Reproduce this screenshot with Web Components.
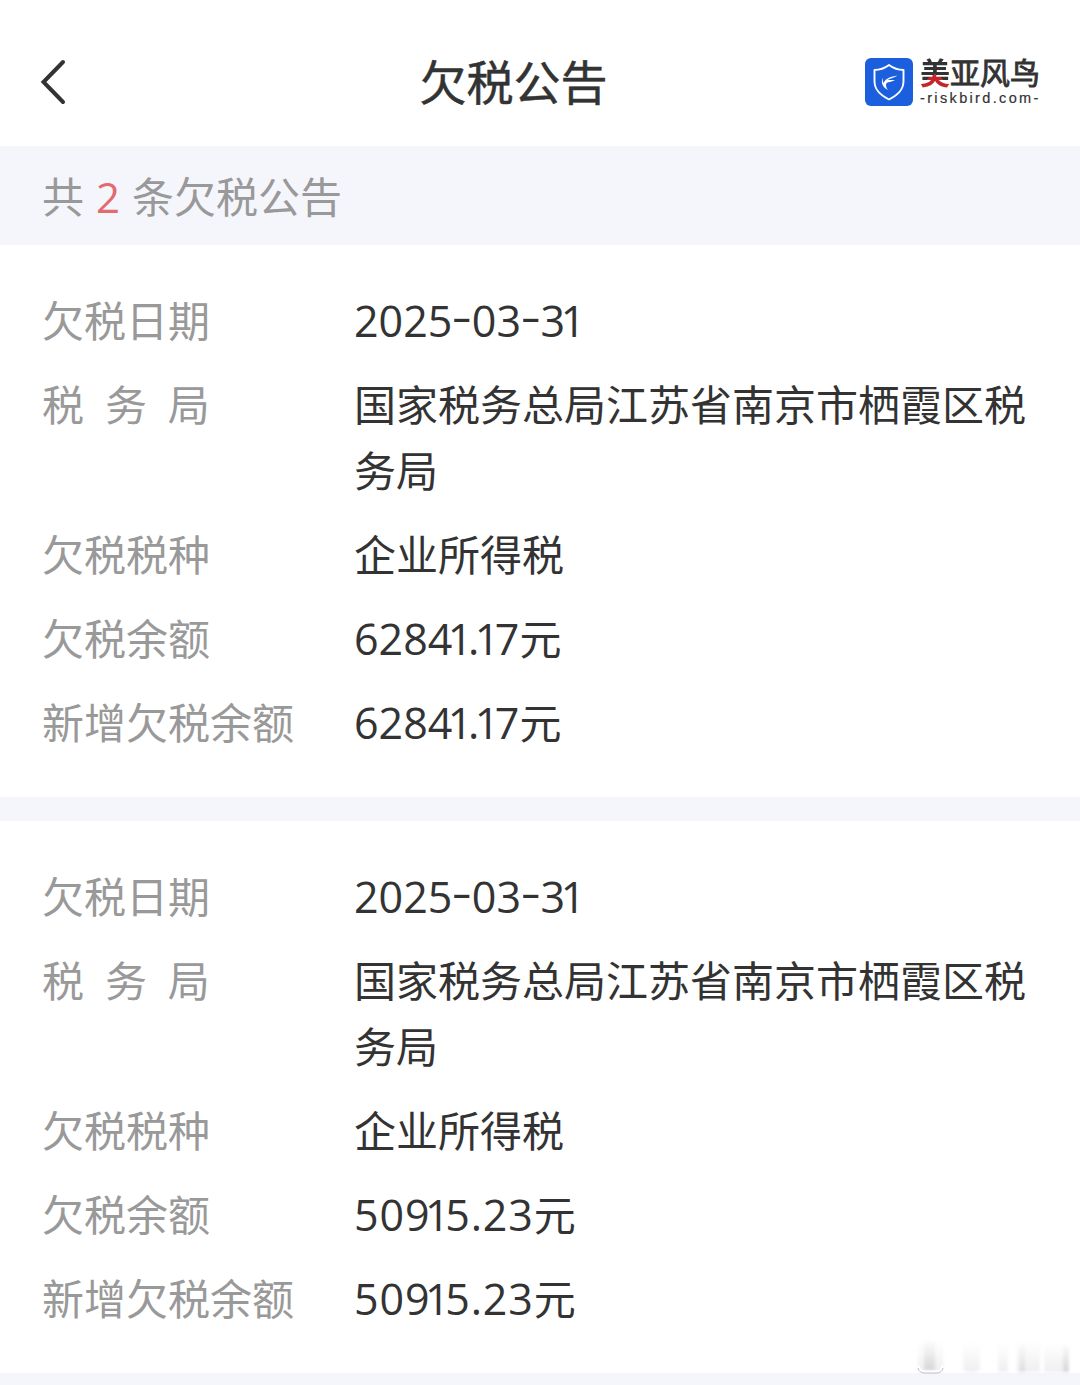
<!DOCTYPE html>
<html lang="zh-CN">
<head>
  <meta charset="utf-8">
  <title>欠税公告</title>
  <style>
    body {
      margin: 0;
      width: 1080px;
      height: 1385px;
      overflow: hidden;
      position: relative;
      background: #f5f6fc;
      color: #333;
      font-family: "Noto Sans CJK SC", sans-serif;
      font-size: 42px;
    }
    main {
      display: flex;
      flex-direction: column;
      gap: 24px;
    }
  </style>
</head>
<body>
  <page-header>欠税公告</page-header>
  <result-count total="2">条欠税公告</result-count>
  <main>
    <tax-notice date="2025-03-31" amount="62841.17"></tax-notice>
    <tax-notice date="2025-03-31" amount="50915.23" style="--tracking: 0.9px"></tax-notice>
  </main>
  <corner-mark></corner-mark>

  <script>
    class BrandLogo extends HTMLElement {
      constructor() {
        super();
        this.attachShadow({ mode: "open" });
        this.shadowRoot.innerHTML = `
          <style>
            :host {
              display: flex;
              gap: 7px;
              align-items: center;
            }
            svg {
              display: block;
            }
            .words {
              display: flex;
              flex-direction: column;
              gap: 2px;
              width: 121px;
              height: 52px;
              white-space: nowrap;
            }
            .name {
              font: 400 30px/31px "Noto Sans CJK SC", sans-serif;
              -webkit-text-stroke: 0.9px #333;
              color: #333;
            }
            .name b {
              color: transparent;
              -webkit-text-stroke: 0;
              background: conic-gradient(from 125deg at 50% 56%, #c4242c 110deg, #333 0);
              -webkit-background-clip: text;
              background-clip: text;
            }
            .site {
              font: 14.500px/18px "Liberation Sans", sans-serif;
              letter-spacing: 2.350px;
              -webkit-text-stroke: 0.2px #333;
              color: #333;
            }
          </style>
          <svg width="48" height="48" viewBox="0 0 48 48">
            <rect width="48" height="48" rx="6" fill="#1b5fdf"/>
            <path d="M24 7 C20 10 15 12 9.500 12 V23 C9.500 32 15 37 24 41.500 C33 37 38.500 32 38.500 23 V12 C33 12 28 10 24 7Z" fill="none" stroke="#fff" stroke-width="1.900" stroke-linejoin="round"/>
            <path d="M17.500 19.500 C17.500 22 18 24 18.500 25 C21 20 26 18.500 32.500 17.500 C30 19.800 26 19.800 22.500 22 L30 22 C27.500 24 24 23.500 21.500 25 C20.500 27 21 29.500 23 32 C18.500 29.500 15.500 26 17.500 19.500Z" fill="#fff"/>
          </svg>
          <div class="words">
            <div class="name"><b>美</b>亚风鸟</div>
            <div class="site">-riskbird.com-</div>
          </div>
        `;
      }
    }

    class PageHeader extends HTMLElement {
      constructor() {
        super();
        this.attachShadow({ mode: "open" });
        this.shadowRoot.innerHTML = `
          <style>
            :host {
              display: grid;
              grid-template-columns: 215px 1fr 215px;
              align-items: center;
              box-sizing: border-box;
              height: 146px;
              padding: 18px 39px 0 40px;
              background: #fff;
            }
            h1 {
              margin: 0;
              padding: 0 54px 5px 0;
              font: 400 47px/70px "Noto Sans CJK SC", sans-serif;
              -webkit-text-stroke: 0.5px #333;
              text-align: center;
            }
            svg {
              display: block;
            }
            brand-logo {
              justify-self: end;
            }
          </style>
          <svg width="30" height="48" viewBox="0 0 30 48">
            <path d="M23 4 L3.500 24 L23 44" fill="none" stroke="#333" stroke-width="4" stroke-linecap="round"/>
          </svg>
          <h1><slot></slot></h1>
          <brand-logo></brand-logo>
        `;
      }
    }

    class ResultCount extends HTMLElement {
      constructor() {
        super();
        this.attachShadow({ mode: "open" });
        this.shadowRoot.innerHTML = `
          <style>
            :host {
              display: flex;
              align-items: center;
              gap: 12px;
              box-sizing: border-box;
              height: 99px;
              padding: 0 42px 2px;
              color: #999;
            }
            .total {
              padding-top: 3px;
              font-family: "Open Sans", sans-serif;
              color: #e26a70;
            }
          </style>
          <span>共</span><span class="total"></span><span><slot></slot></span>
        `;
        this.shadowRoot.querySelector(".total").textContent = this.getAttribute("total");
      }
    }

    class NoticeRow extends HTMLElement {
      constructor() {
        super();
        this.attachShadow({ mode: "open" });
        this.shadowRoot.innerHTML = `
          <style>
            :host {
              display: grid;
              grid-template-columns: 312px 1fr;
              line-height: 66px;
            }
            .label {
              color: #999;
              word-spacing: 11.500px;
            }
          </style>
          <span class="label"></span>
          <span><slot></slot></span>
        `;
        this.shadowRoot.querySelector(".label").textContent = this.getAttribute("label");
      }
    }

    class TaxNotice extends HTMLElement {
      constructor() {
        super();
        this.attachShadow({ mode: "open" });
        // the figure 1 is set tight on both sides, the dash wider and higher
        const figures = (text) => text.replace(/.1/g, "<i>$&</i>").replace(/-/g, "<b>-</b>");
        const date = figures(this.getAttribute("date"));
        const amount = figures(this.getAttribute("amount"));
        this.shadowRoot.innerHTML = `
          <style>
            :host {
              display: flex;
              flex-direction: column;
              gap: 18px;
              padding: 40.500px 42px 43.500px;
              background: #fff;
            }
            .num {
              font: 43px/60px "Open Sans", sans-serif;
            }
            .amount {
              letter-spacing: var(--tracking, 0);
            }
            i {
              font-style: normal;
              letter-spacing: -4.500px;
            }
            b {
              display: inline-block;
              width: 19.500px;
              font-weight: 400;
              text-align: center;
              transform: translateY(-5px) scaleX(1.45);
            }
          </style>
          <notice-row label="欠税日期"><span class="num date">${date}</span></notice-row>
          <notice-row label="税 务 局">国家税务总局江苏省南京市栖霞区税务局</notice-row>
          <notice-row label="欠税税种">企业所得税</notice-row>
          <notice-row label="欠税余额"><span class="num amount">${amount}</span>元</notice-row>
          <notice-row label="新增欠税余额"><span class="num amount">${amount}</span>元</notice-row>
        `;
      }
    }

    // faded mark lying over the bottom right corner
    class CornerMark extends HTMLElement {
      constructor() {
        super();
        this.attachShadow({ mode: "open" });
        this.shadowRoot.innerHTML = `
          <style>
            :host {
              position: absolute;
              right: 0;
              bottom: 0;
            }
            svg {
              display: block;
            }
          </style>
          <svg width="180" height="60" viewBox="0 0 180 60">
            <defs>
              <linearGradient id="fade" x1="0" y1="0" x2="0" y2="1">
                <stop offset="0" stop-color="#999" stop-opacity="0"/>
                <stop offset="1" stop-color="#999" stop-opacity="0.400"/>
              </linearGradient>
              <filter id="soft"><feGaussianBlur stdDeviation="1.500"/></filter>
            </defs>
            <g fill="url(#fade)" filter="url(#soft)">
              <rect x="18" y="16" width="25" height="31" rx="5" opacity="0.400"/>
              <rect x="24" y="14" width="11" height="31" opacity="0.700"/>
              <rect x="63" y="18" width="17" height="29" rx="5" opacity="0.400"/>
              <rect x="98" y="18" width="10" height="29" opacity="0.400"/>
              <rect x="117" y="16" width="8" height="31" opacity="0.500"/>
              <rect x="120" y="16" width="20" height="31" opacity="0.400"/>
              <rect x="144" y="19" width="25" height="28" opacity="0.400"/>
              <rect x="163" y="18" width="6" height="29" opacity="0.700"/>
            </g>
            <path d="M19 41 Q19 46 24 46.500 H37 Q42 46 42 41" fill="none" stroke="#fff" stroke-width="2"/>
            <path d="M18 43 Q19 48 25 48 H36 Q42 48 43 43" fill="none" stroke="#bbb" stroke-width="0.900"/>
          </svg>
        `;
      }
    }

    customElements.define("brand-logo", BrandLogo);
    customElements.define("page-header", PageHeader);
    customElements.define("result-count", ResultCount);
    customElements.define("notice-row", NoticeRow);
    customElements.define("tax-notice", TaxNotice);
    customElements.define("corner-mark", CornerMark);
  </script>
</body>
</html>
